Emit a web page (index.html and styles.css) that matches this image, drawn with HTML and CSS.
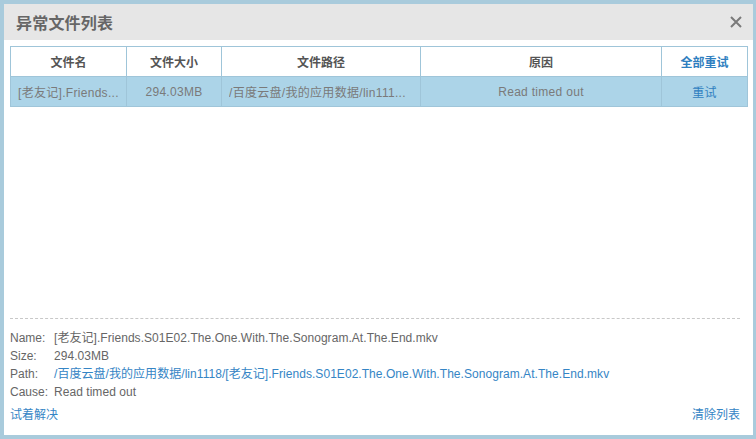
FILE: index.html
```html
<!DOCTYPE html>
<html lang="zh-CN">
<head>
<meta charset="utf-8">
<title>异常文件列表</title>
<link rel="stylesheet" href="styles.css">
</head>
<body>
<div class="dialog">
  <div class="dialog-header">
    <span class="dialog-title">异常文件列表</span>
    <span class="close" aria-label="关闭">
      <svg width="12" height="12" viewBox="0 0 12 12"><path d="M1 1L11 11M11 1L1 11" stroke="#7a7a7a" stroke-width="2" fill="none"/></svg>
    </span>
  </div>
  <div class="dialog-body">
    <table class="files">
      <colgroup>
        <col class="c-name"><col class="c-size"><col class="c-path"><col class="c-cause"><col class="c-act">
      </colgroup>
      <thead>
        <tr>
          <th>文件名</th>
          <th>文件大小</th>
          <th>文件路径</th>
          <th>原因</th>
          <th class="link">全部重试</th>
        </tr>
      </thead>
      <tbody>
        <tr class="selected">
          <td class="left"><span class="ellip">[老友记].Friends...</span></td>
          <td>294.03MB</td>
          <td class="left"><span class="ellip">/百度云盘/我的应用数据/lin111...</span></td>
          <td>Read timed out</td>
          <td class="link">重试</td>
        </tr>
      </tbody>
    </table>
  </div>
  <div class="dialog-footer">
    <div class="info">
      <span class="label">Name:</span><span class="value">[老友记].Friends.S01E02.The.One.With.The.Sonogram.At.The.End.mkv</span>
      <span class="label">Size:</span><span class="value">294.03MB</span>
      <span class="label">Path:</span><span class="value path">/百度云盘/我的应用数据/lin1118/[老友记].Friends.S01E02.The.One.With.The.Sonogram.At.The.End.mkv</span>
      <span class="label">Cause:</span><span class="value">Read timed out</span>
    </div>
    <div class="actions">
      <span class="link">试着解决</span>
      <span class="link">清除列表</span>
    </div>
  </div>
</div>
</body>
</html>
```
FILE: styles.css
```css
* { box-sizing: border-box; }
html, body { margin: 0; padding: 0; }
body {
  background: #a9cbdc;
  font-family: "Liberation Sans", "Noto Sans CJK SC", sans-serif;
  font-size: 12px;
  color: #666;
  width: 756px;
  height: 439px;
  overflow: hidden;
}
.dialog {
  margin: 4px 3px 0 4px;
  height: 431px;
  background: #fff;
  display: flex;
  flex-direction: column;
}
.dialog-header {
  height: 36px;
  flex: none;
  background: #e6e6e6;
  display: flex;
  align-items: center;
  justify-content: space-between;
  padding: 0 11px 0 12px;
}
.dialog-title {
  font-size: 16px;
  font-weight: bold;
  color: #666;
  font-family: "Noto Sans CJK SC", sans-serif;
  letter-spacing: 0.2px;
}
.close { display: flex; align-items: center; }
.dialog-body {
  flex: 1;
  padding: 6px 6px 0 6px;
}
.files {
  width: 737px;
  border-collapse: collapse;
  table-layout: fixed;
}
.c-name { width: 116px; }
.c-size { width: 95px; }
.c-path { width: 199px; }
.c-cause { width: 241px; }
.c-act { width: 86px; }
.files th, .files td {
  border: 1px solid #9fc5d9;
  height: 30px;
  padding: 0 6px;
  text-align: center;
  white-space: nowrap;
  overflow: hidden;
}
.files th {
  font-weight: bold;
  color: #555;
  font-family: "Noto Sans CJK SC", sans-serif;
  font-size: 12px;
}
.files td { color: #7a7a7a; letter-spacing: 0.3px; }
.files td.left { text-align: left; padding-left: 7px; }
.files tr.selected td { background: #acd4e8; }
.files .link { color: #2f7fc0; }
.ellip { display: block; overflow: hidden; }
.dialog-footer {
  flex: none;
  margin: 0 13px 0 6px;
  border-top: 1px dashed #c8c8c8;
  padding: 10px 0 11px 0;
}
.info {
  display: grid;
  grid-template-columns: 44px 1fr;
  line-height: 18px;
}
.label { color: #666; }
.value { color: #666; white-space: nowrap; letter-spacing: 0.05px; }
.value.path { color: #3585c5; }
.actions {
  display: flex;
  justify-content: space-between;
  margin-top: 5px;
  line-height: 18px;
}
.link { color: #2f7fc0; }
.actions .link { color: #3585c5; }
```
